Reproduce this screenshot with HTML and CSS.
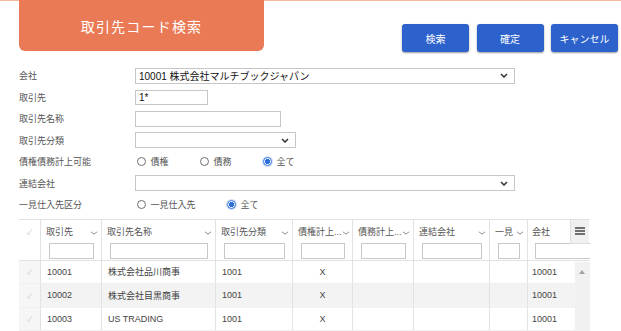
FILE: index.html
```html
<!DOCTYPE html>
<html lang="ja">
<head>
    <meta charset="UTF-8">
    <meta name="viewport" content="width=device-width, initial-scale=1.0">
    <title>取引先コード検索</title>
    <link rel="stylesheet" href="styles.css">
</head>
<body>
    <div class="top">
        <div class="title-tab">取引先コード検索</div>
        <div class="actions">
            <button class="btn">検索</button>
            <button class="btn">確定</button>
            <button class="btn">キャンセル</button>
        </div>
    </div>

    <form class="search-form">
        <div class="form-row">
            <label class="form-label">会社</label>
            <div class="field select w-wide"><span class="value">10001 株式会社マルチブックジャパン</span><svg class="chev" width="8" height="5" viewBox="0 0 8 5"><path d="M1 1l3 3 3-3" fill="none" stroke="#333" stroke-width="1.5"/></svg></div>
        </div>
        <div class="form-row">
            <label class="form-label">取引先</label>
            <div class="field w-code"><span class="value">1*</span></div>
        </div>
        <div class="form-row">
            <label class="form-label">取引先名称</label>
            <div class="field w-name"></div>
        </div>
        <div class="form-row">
            <label class="form-label">取引先分類</label>
            <div class="field select w-type"><span class="value"></span><svg class="chev" width="8" height="5" viewBox="0 0 8 5"><path d="M1 1l3 3 3-3" fill="none" stroke="#333" stroke-width="1.5"/></svg></div>
        </div>
        <div class="form-row">
            <label class="form-label">債権債務計上可能</label>
            <div class="radios">
                <label class="radio"><input type="radio" name="debt"><span>債権</span></label>
                <label class="radio"><input type="radio" name="debt"><span>債務</span></label>
                <label class="radio"><input type="radio" name="debt" checked><span>全て</span></label>
            </div>
        </div>
        <div class="form-row">
            <label class="form-label">連結会社</label>
            <div class="field select w-wide"><span class="value"></span><svg class="chev" width="8" height="5" viewBox="0 0 8 5"><path d="M1 1l3 3 3-3" fill="none" stroke="#333" stroke-width="1.5"/></svg></div>
        </div>
        <div class="form-row">
            <label class="form-label">一見仕入先区分</label>
            <div class="radios">
                <label class="radio"><input type="radio" name="oneoff"><span>一見仕入先</span></label>
                <label class="radio"><input type="radio" name="oneoff" checked><span>全て</span></label>
            </div>
        </div>
    </form>

    <div class="grid">
        <div class="grid-row grid-head">
            <div class="cell check-cell">&#10003;</div>
            <div class="cell head-cell"><div class="head-label"><span>取引先</span><i class="sort"></i></div><div class="filter"></div></div>
            <div class="cell head-cell"><div class="head-label"><span>取引先名称</span><i class="sort"></i></div><div class="filter"></div></div>
            <div class="cell head-cell"><div class="head-label"><span>取引先分類</span><i class="sort"></i></div><div class="filter"></div></div>
            <div class="cell head-cell"><div class="head-label"><span>債権計上...</span><i class="sort"></i></div><div class="filter"></div></div>
            <div class="cell head-cell"><div class="head-label"><span>債務計上...</span><i class="sort"></i></div><div class="filter"></div></div>
            <div class="cell head-cell"><div class="head-label"><span>連結会社</span><i class="sort"></i></div><div class="filter"></div></div>
            <div class="cell head-cell"><div class="head-label"><span>一見</span><i class="sort"></i></div><div class="filter"></div></div>
            <div class="cell head-cell last"><div class="head-label"><span>会社</span></div><div class="filter"></div></div>
        </div>
        <div class="grid-row">
            <div class="cell check-cell">&#10003;</div>
            <div class="cell">10001</div>
            <div class="cell">株式会社品川商事</div>
            <div class="cell">1001</div>
            <div class="cell center">X</div>
            <div class="cell"></div>
            <div class="cell"></div>
            <div class="cell"></div>
            <div class="cell last">10001</div>
        </div>
        <div class="grid-row alt">
            <div class="cell check-cell">&#10003;</div>
            <div class="cell">10002</div>
            <div class="cell">株式会社目黒商事</div>
            <div class="cell">1001</div>
            <div class="cell center">X</div>
            <div class="cell"></div>
            <div class="cell"></div>
            <div class="cell"></div>
            <div class="cell last">10001</div>
        </div>
        <div class="grid-row">
            <div class="cell check-cell">&#10003;</div>
            <div class="cell">10003</div>
            <div class="cell">US TRADING</div>
            <div class="cell">1001</div>
            <div class="cell center">X</div>
            <div class="cell"></div>
            <div class="cell"></div>
            <div class="cell"></div>
            <div class="cell last">10001</div>
        </div>

        <div class="menu-btn">
            <svg width="10" height="8" viewBox="0 0 10 8"><path d="M0 1h10M0 4h10M0 7h10" stroke="#444" stroke-width="1.3"/></svg>
        </div>
        <div class="scrollbar"><i class="scroll-up"></i></div>
    </div>
</body>
</html>
```

FILE: styles.css
```css
body {
    margin: 0;
    font-family: "Liberation Sans", "Noto Sans CJK JP", sans-serif;
    font-size: 9px;
    color: #444;
    background-color: #fff;
    overflow: hidden;
}
.top {
    display: flex;
    justify-content: space-between;
    align-items: flex-start;
    height: 51px;
    padding: 0 3px 0 19px;
    border-top: 1px solid #f5b79f;
}
.title-tab {
    width: 245px;
    height: 50px;
    margin-top: -1px;
    background-color: #ea7a55;
    border-radius: 0 0 6px 6px;
    color: #fff;
    font-size: 14px;
    letter-spacing: 1.2px;
    display: flex;
    align-items: center;
    justify-content: center;
    padding-top: 1px;
}
.actions {
    display: flex;
    gap: 7.5px;
    margin-top: 23px;
}
.btn {
    width: 67px;
    height: 28px;
    background-color: #2d62cc;
    color: #fff;
    border: none;
    border-radius: 3px;
    box-shadow: 0 1px 2px rgba(0, 0, 0, 0.4);
    font-family: inherit;
    font-size: 10px;
    padding: 0;
}

.search-form {
    padding: 13px 0 0 19px;
}
.form-row {
    display: flex;
    align-items: center;
    height: 21.5px;
}
.form-label {
    width: 116px;
    color: #555;
}
.field {
    box-sizing: border-box;
    height: 16px;
    border: 1px solid #c6c6c6;
    background-color: #fff;
    display: flex;
    align-items: center;
    justify-content: space-between;
    padding: 0 6px 0 3px;
    font-size: 10px;
    color: #111;
}
.w-wide { width: 380px; }
.w-code { width: 73px; height: 15px; }
.w-name { width: 146px; }
.w-type { width: 161px; }

.radios {
    display: flex;
    padding-left: 1.5px;
}
.radio {
    display: flex;
    align-items: center;
    margin-right: 31px;
    color: #555;
}
.radio input {
    appearance: none;
    width: 9px;
    height: 9px;
    margin: 0 5px 0 0;
    border: 1px solid #6f6f6f;
    border-radius: 50%;
    background-color: #fff;
}
.radio input:checked {
    border-color: #2a6fdb;
    background: radial-gradient(circle, #2a6fdb 0 2.3px, #fff 2.8px);
    box-shadow: 0 0 0 1px #cfe0fa;
}

.grid {
    position: relative;
    width: 571px;
    margin: 3px 0 0 19px;
    border-top: 1px solid #e2e2e2;
    overflow: hidden;
}
.grid-row {
    box-sizing: border-box;
    display: grid;
    grid-template-columns: 22px 61px 114px 77px 60px 61px 76px 38px 62px;
    height: 23.5px;
    border-bottom: 1px solid #f0f0f0;
}
.grid-row.alt {
    background-color: #f3f3f3;
}
.grid-head {
    height: 41px;
    border-bottom: 1px solid #e2e2e2;
}
.cell {
    box-sizing: border-box;
    border-right: 1px solid #e2e2e2;
    padding: 0 6px;
    display: flex;
    align-items: center;
    white-space: nowrap;
    overflow: hidden;
}
.cell.center {
    justify-content: center;
}
.cell.last {
    border-right: none;
    padding-left: 4px;
}
.check-cell {
    justify-content: center;
    background-color: #f6f6f6;
    color: #cfcfcf;
    font-size: 8px;
    padding: 0;
}
.grid-head .check-cell {
    align-items: flex-start;
    padding-top: 6px;
    background-color: #fff;
}
.head-cell {
    flex-direction: column;
    align-items: stretch;
    padding: 5px 4px 0 5px;
    overflow: visible;
}
.head-label {
    display: flex;
    justify-content: space-between;
    align-items: center;
    height: 13px;
    color: #555;
}
.sort {
    width: 5px;
    height: 5px;
    border-right: 1px solid #888;
    border-bottom: 1px solid #888;
    transform: scale(0.8, 0.6) rotate(45deg);
    margin: 2px 0 0 1px;
    flex-shrink: 0;
}
.filter {
    box-sizing: border-box;
    height: 16px;
    margin: 5px 3px 0 3px;
    border: 1px solid #c8c8c8;
    background-color: #fff;
}
.last .filter {
    margin-left: 3px;
    width: 60px;
}
.menu-btn {
    position: absolute;
    top: 0;
    right: 1px;
    width: 19px;
    height: 24px;
    box-sizing: border-box;
    background-color: #f0f0f0;
    border-left: 1px solid #dedede;
    border-bottom: 1px solid #dedede;
    display: flex;
    align-items: center;
    justify-content: center;
}
.scrollbar {
    position: absolute;
    top: 42px;
    right: 0;
    bottom: 0;
    width: 15px;
    background-color: #f1f1f1;
}
.scroll-up {
    position: absolute;
    top: 8px;
    left: 4px;
    border-left: 3.5px solid transparent;
    border-right: 3.5px solid transparent;
    border-bottom: 4px solid #a3a3a3;
}
```
